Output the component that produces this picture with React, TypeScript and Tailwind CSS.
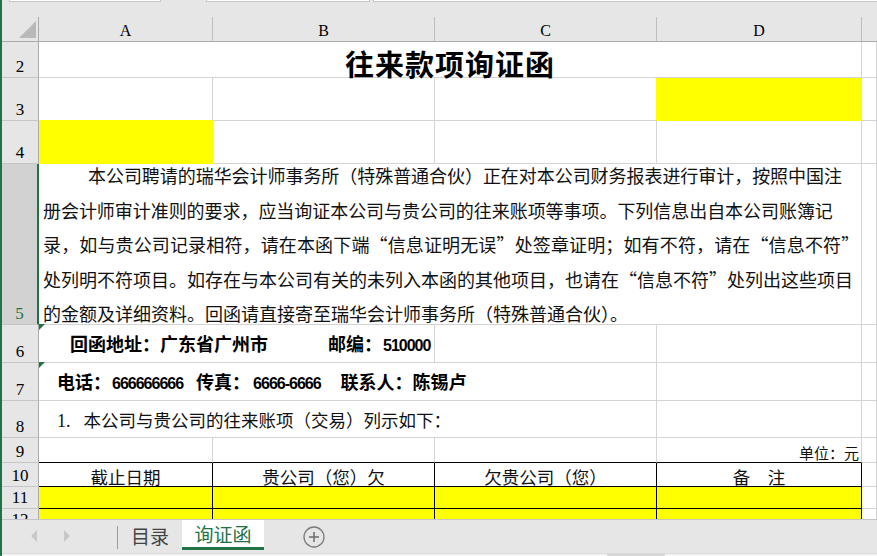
import React from 'react'

// Excel-style sheet: 询证函 tab
const grid = 'border-r border-b border-[#d4d4d4]'
const yellow = 'bg-[#ffff00] border-r border-b border-[#ffff00]'
const black = 'border-r border-b border-black'
const cjk = "font-['Noto_Sans_CJK_SC',sans-serif]"
const num = "font-['Liberation_Sans',sans-serif] text-[16px] tracking-[-1px]"

function Head({ n, active }: { n: number; active?: boolean }) {
  return (
    <div
      className={`flex items-end justify-center pb-[2px] border-b border-b-[#c6c6c6] font-['Liberation_Serif',serif] text-[17px] leading-none ${
        active
          ? 'bg-[#d2d2d2] text-[#217346] border-r-2 border-r-[#217346]'
          : 'bg-[#e6e6e6] text-black border-r border-r-[#ababab]'
      }`}
    >
      {n}
    </div>
  )
}

function ColHead({ l }: { l: string }) {
  return (
    <div className="flex items-end justify-center pb-[2px] bg-[#e6e6e6] border-r border-b border-r-[#bdbdbd] border-b-[#ababab] font-['Liberation_Serif',serif] text-[16px] leading-none text-black">
      {l}
    </div>
  )
}

function Mark() {
  return <span className="absolute left-0 top-[-1px] w-0 h-0 border-t-[6px] border-t-[#217346] border-r-[6px] border-r-transparent" />
}

const para = [
  { t: '本公司聘请的瑞华会计师事务所（特殊普通合伙）正在对本公司财务报表进行审计，按照中国注', c: 'pl-[45px] tracking-[-0.05px]' },
  { t: '册会计师审计准则的要求，应当询证本公司与贵公司的往来账项等事项。下列信息出自本公司账簿记', c: 'tracking-[-0.05px]' },
  { t: '录，如与贵公司记录相符，请在本函下端“信息证明无误”处签章证明；如有不符，请在“信息不符”', c: 'tracking-[0.14px]' },
  { t: '处列明不符项目。如存在与本公司有关的未列入本函的其他项目，也请在“信息不符”处列出这些项目', c: '' },
  { t: '的金额及详细资料。回函请直接寄至瑞华会计师事务所（特殊普通合伙）。', c: '' },
]

export default function App() {
  return (
    <div className="flex w-[877px] h-[556px] overflow-hidden bg-white text-[#111]">
      <div className="w-[2px] shrink-0 bg-[#217346]" />
      <div className="flex flex-col w-[875px]">
        {/* formula bar remains */}
        <div className="h-[17px] shrink-0 bg-[#e6e6e6] flex items-start">
          <div className="ml-[7px] w-[152px] h-[2px] bg-white border-x border-b border-[#c6c6c6]" />
          <div className="ml-[45px] w-[164px] h-[2px] bg-white border-x border-b border-[#c6c6c6]" />
          <div className="ml-[3px] flex-1 h-[2px] bg-white border-l border-b border-[#c6c6c6]" />
        </div>

        <div className="h-[502px] shrink-0 overflow-hidden">
          <div className="grid grid-cols-[37px_174px_222px_222px_205px_15px] grid-rows-[25px_36px_43px_43px_161px_38px_38px_37px_25px_24px_22px_22px]">
            {/* column header */}
            <div className="flex items-end justify-end pr-[2px] pb-[3px] bg-[#e6e6e6] border-r border-b border-[#ababab]">
              <svg width="17" height="17" viewBox="0 0 17 17">
                <path d="M17 0 L17 17 L0 17 Z" fill="#b9b9b9" />
              </svg>
            </div>
            <ColHead l="A" />
            <ColHead l="B" />
            <ColHead l="C" />
            <ColHead l="D" />
            <div className="bg-[#e6e6e6] border-b border-[#ababab]" />

            {/* 2 */}
            <Head n={2} />
            <div className={`col-span-4 flex items-center justify-center pt-[7px] ${grid} ${cjk} font-bold text-[29px] tracking-[1px] leading-none text-black`}>
              往来款项询证函
            </div>
            <div className={grid} />

            {/* 3 */}
            <Head n={3} />
            <div className="border-r border-b border-r-[#d4d4d4] border-b-[#ffff00]" />
            <div className={grid} />
            <div className="border-r border-b border-r-[#ffff00] border-b-[#d4d4d4]" />
            <div className={yellow} />
            <div className={grid} />

            {/* 4 */}
            <Head n={4} />
            <div className={yellow} />
            <div className={grid} />
            <div className={grid} />
            <div className={grid} />
            <div className={grid} />

            {/* 5 */}
            <Head n={5} active />
            <div className={`col-span-4 flex flex-col pl-[4px] ${grid} ${cjk} text-[18px] leading-[34.5px]`}>
              {para.map((p, i) => (
                <div key={i} className={`whitespace-nowrap ${i === 0 ? '-mt-[6px]' : ''} ${p.c}`}>
                  {p.t}
                </div>
              ))}
            </div>
            <div className={grid} />

            {/* 6 */}
            <Head n={6} />
            <div className={`col-span-2 relative flex items-center pl-[31px] ${grid}`}>
              <Mark />
              <div className="whitespace-nowrap font-bold text-[18px] leading-none text-black">
                <span className={cjk}>回函地址：广东省广州市</span>
                <span className={`${cjk} ml-[60px]`}>邮编：</span>
                <span className={`ml-[1px] ${num}`}>510000</span>
              </div>
            </div>
            <div className={grid} />
            <div className={grid} />
            <div className={grid} />

            {/* 7 */}
            <Head n={7} />
            <div className={`col-span-3 relative flex items-center pl-[18px] ${grid}`}>
              <Mark />
              <div className="whitespace-nowrap font-bold text-[18px] leading-none text-black">
                <span className={cjk}>电话：</span>
                <span className={`ml-[1px] ${num}`}>666666666</span>
                <span className={`${cjk} ml-[13px]`}>传真：</span>
                <span className={`ml-[3px] ${num}`}>6666-6666</span>
                <span className={`${cjk} ml-[20px]`}>联系人：陈锡卢</span>
              </div>
            </div>
            <div className={grid} />
            <div className={grid} />

            {/* 8 */}
            <Head n={8} />
            <div className={`col-span-3 flex items-center pt-[3px] pl-[18px] ${grid}`}>
              <div className="whitespace-nowrap text-[17.5px] leading-none">
                <span className="font-['Liberation_Serif',serif] text-[18px]">1.</span>
                <span className={`${cjk} ml-[13px]`}>本公司与贵公司的往来账项（交易）列示如下：</span>
              </div>
            </div>
            <div className={grid} />
            <div className={grid} />

            {/* 9 */}
            <Head n={9} />
            <div className="border-r border-b border-r-[#d4d4d4] border-b-black" />
            <div className="border-r border-b border-r-[#d4d4d4] border-b-black" />
            <div className="border-r border-b border-r-[#d4d4d4] border-b-black" />
            <div className={`flex items-center justify-end pr-[2px] pt-[4px] border-r border-b border-r-[#d4d4d4] border-b-black ${cjk} text-[15px] leading-none`}>
              单位：元
            </div>
            <div className={grid} />

            {/* 10 */}
            <Head n={10} />
            {['截止日期', '贵公司（您）欠', '欠贵公司（您）', '备　注'].map(h => (
              <div key={h} className={`flex items-center justify-center pt-[4px] ${black} ${cjk} text-[17.5px] leading-none`}>
                {h}
              </div>
            ))}
            <div className={grid} />

            {/* 11 */}
            <Head n={11} />
            <div className={`bg-[#ffff00] ${black}`} />
            <div className={`bg-[#ffff00] ${black}`} />
            <div className={`bg-[#ffff00] ${black}`} />
            <div className={`bg-[#ffff00] ${black}`} />
            <div className={grid} />

            {/* 12 */}
            <Head n={12} />
            <div className={`bg-[#ffff00] ${black}`} />
            <div className={`bg-[#ffff00] ${black}`} />
            <div className={`bg-[#ffff00] ${black}`} />
            <div className={`bg-[#ffff00] ${black}`} />
            <div className={grid} />
          </div>
        </div>

        {/* sheet tabs */}
        <div className={`h-[31px] shrink-0 flex border-t border-[#c6c6c6] bg-[#e6e6e6] ${cjk}`}>
          <div className="w-[115px] flex items-center pt-[2px] pl-[29px] gap-[27px]">
            <svg width="6" height="12" viewBox="0 0 6 12">
              <path d="M6 0 L0 6 L6 12 Z" fill="#c8c8c8" />
            </svg>
            <svg width="6" height="12" viewBox="0 0 6 12">
              <path d="M0 0 L6 6 L0 12 Z" fill="#c8c8c8" />
            </svg>
          </div>
          <div className="w-px h-[23px] self-end mb-[1px] bg-[#9a9a9a]" />
          <div className="w-[64px] flex items-center justify-center text-[19px] leading-none text-[#444]">目录</div>
          <div className="w-[82px] flex items-center justify-center bg-white border-b-[3px] border-[#217346] text-[19px] leading-none text-[#217346]">
            询证函
          </div>
          <div className="ml-[39px] flex items-center pt-[4px]">
            <svg width="22" height="22" viewBox="0 0 22 22">
              <circle cx="11" cy="11" r="10" fill="none" stroke="#7b7b7b" strokeWidth="1.3" />
              <path d="M6 11 H16 M11 6 V16" stroke="#6b6b6b" strokeWidth="1.5" />
            </svg>
          </div>
        </div>
        <div className="h-[6px] shrink-0 flex flex-col justify-end bg-[#e6e6e6]">
          <div className="h-[3px] flex bg-[#f3f3f3] border-t border-[#dadada]">
            <div className="ml-[605px] w-[58px] bg-[#d6d6d6]" />
          </div>
        </div>
      </div>
    </div>
  )
}
